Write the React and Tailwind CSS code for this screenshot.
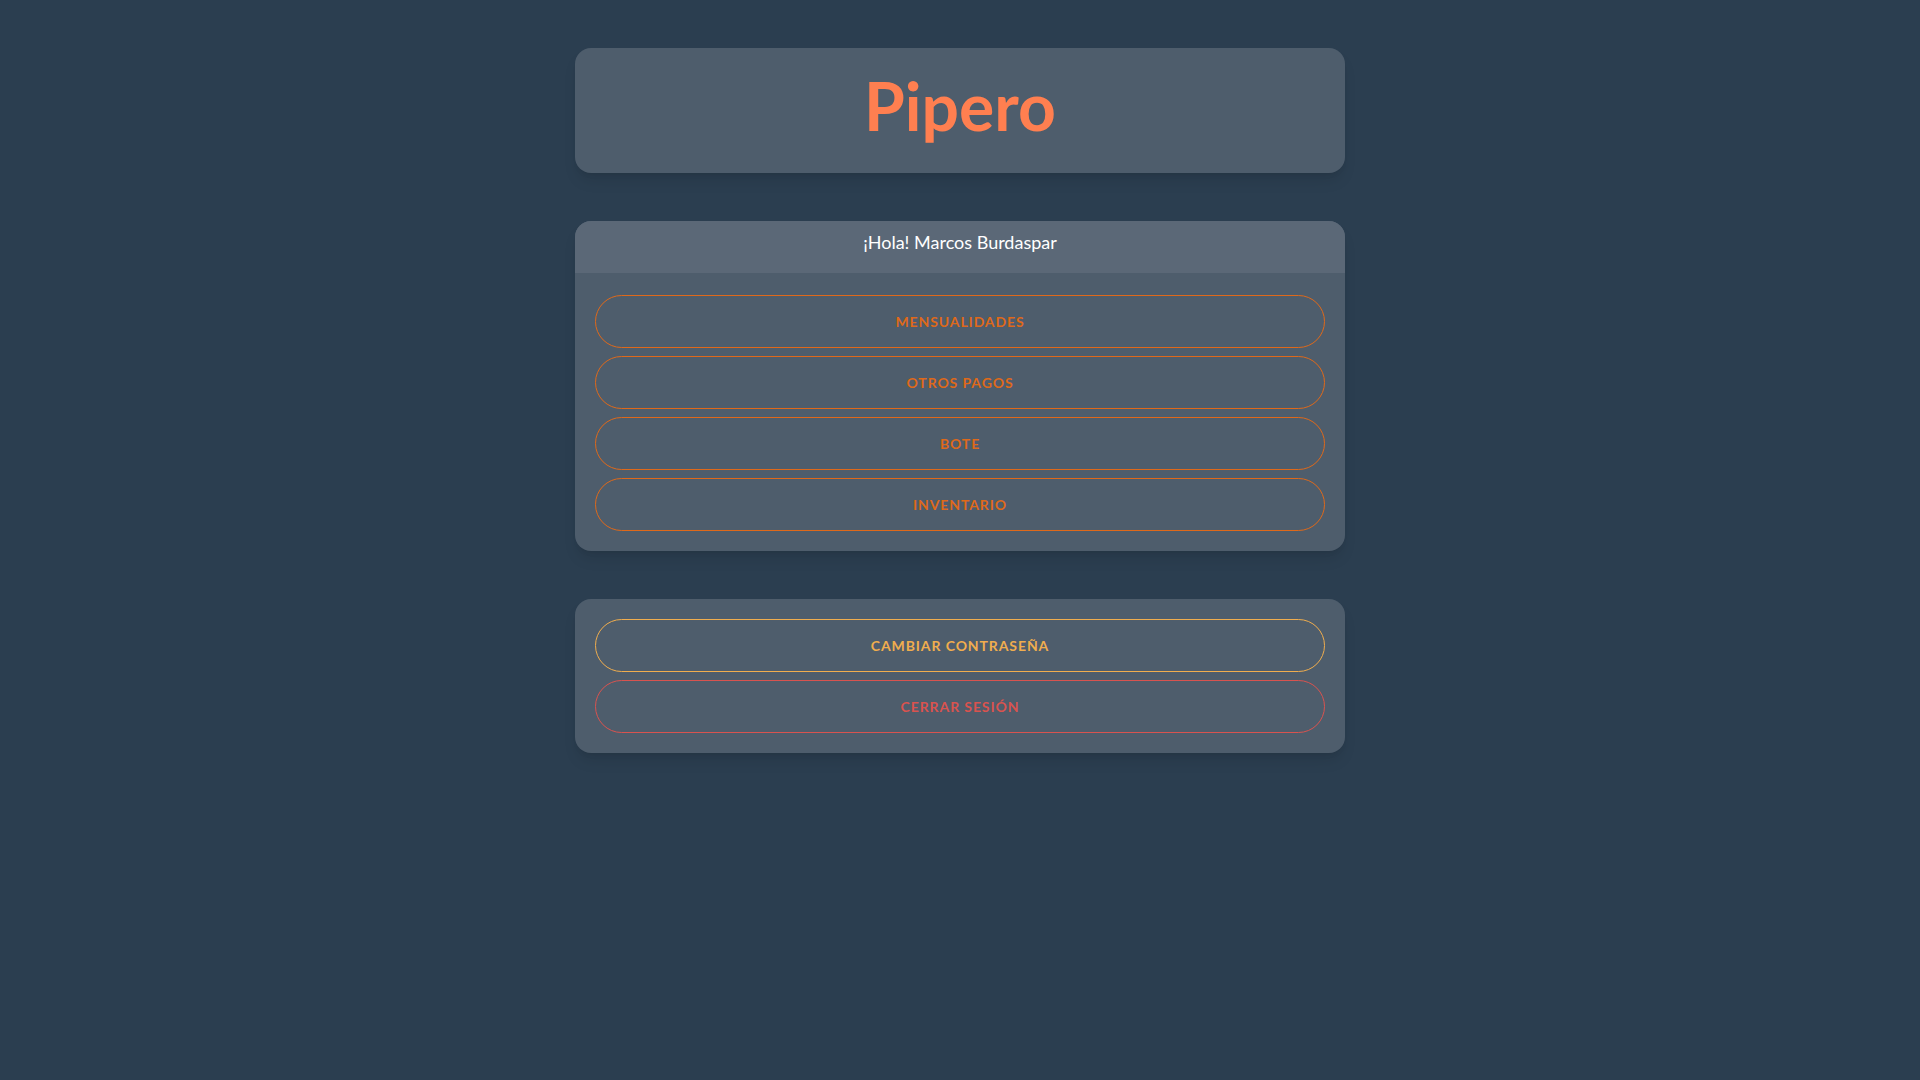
const menu = ['Mensualidades', 'Otros pagos', 'Bote', 'Inventario'];

const btn =
  'w-full h-[53px] rounded-full border bg-transparent text-[14px] font-bold uppercase tracking-[0.9px]';

export default function App() {
  return (
    <div className="min-h-screen bg-[#2b3e50] font-['Lato',sans-serif]">
      <div className="mx-auto flex w-[770px] flex-col gap-12 pt-12">
        {/* Titulo */}
        <div className="flex h-[125px] items-center justify-center rounded-2xl bg-[#4e5d6c] pb-[9px] shadow-lg shadow-black/10">
          <h1 className="text-[66px] font-bold leading-none text-[#ff7f50]">Pipero</h1>
        </div>

        {/* Menu principal */}
        <div className="overflow-hidden rounded-2xl bg-[#4e5d6c] shadow-lg shadow-black/10">
          <div className="h-[52px] bg-[#5b6877] pt-[8px] text-center text-[18px] leading-[27px] text-white">
            ¡Hola! Marcos Burdaspar
          </div>
          <div className="flex flex-col gap-2 px-5 pt-[22px] pb-5">
            {menu.map((item) => (
              <button key={item} className={btn + ' border-[#df691a] text-[#df691a]'}>
                {item}
              </button>
            ))}
          </div>
        </div>

        {/* Cuenta */}
        <div className="flex flex-col gap-2 rounded-2xl bg-[#4e5d6c] p-5 shadow-lg shadow-black/10">
          <button className={btn + ' border-[#f0ad4e] text-[#f0ad4e]'}>Cambiar contraseña</button>
          <button className={btn + ' border-[#d9534f] text-[#d9534f]'}>Cerrar sesión</button>
        </div>
      </div>
    </div>
  );
}
